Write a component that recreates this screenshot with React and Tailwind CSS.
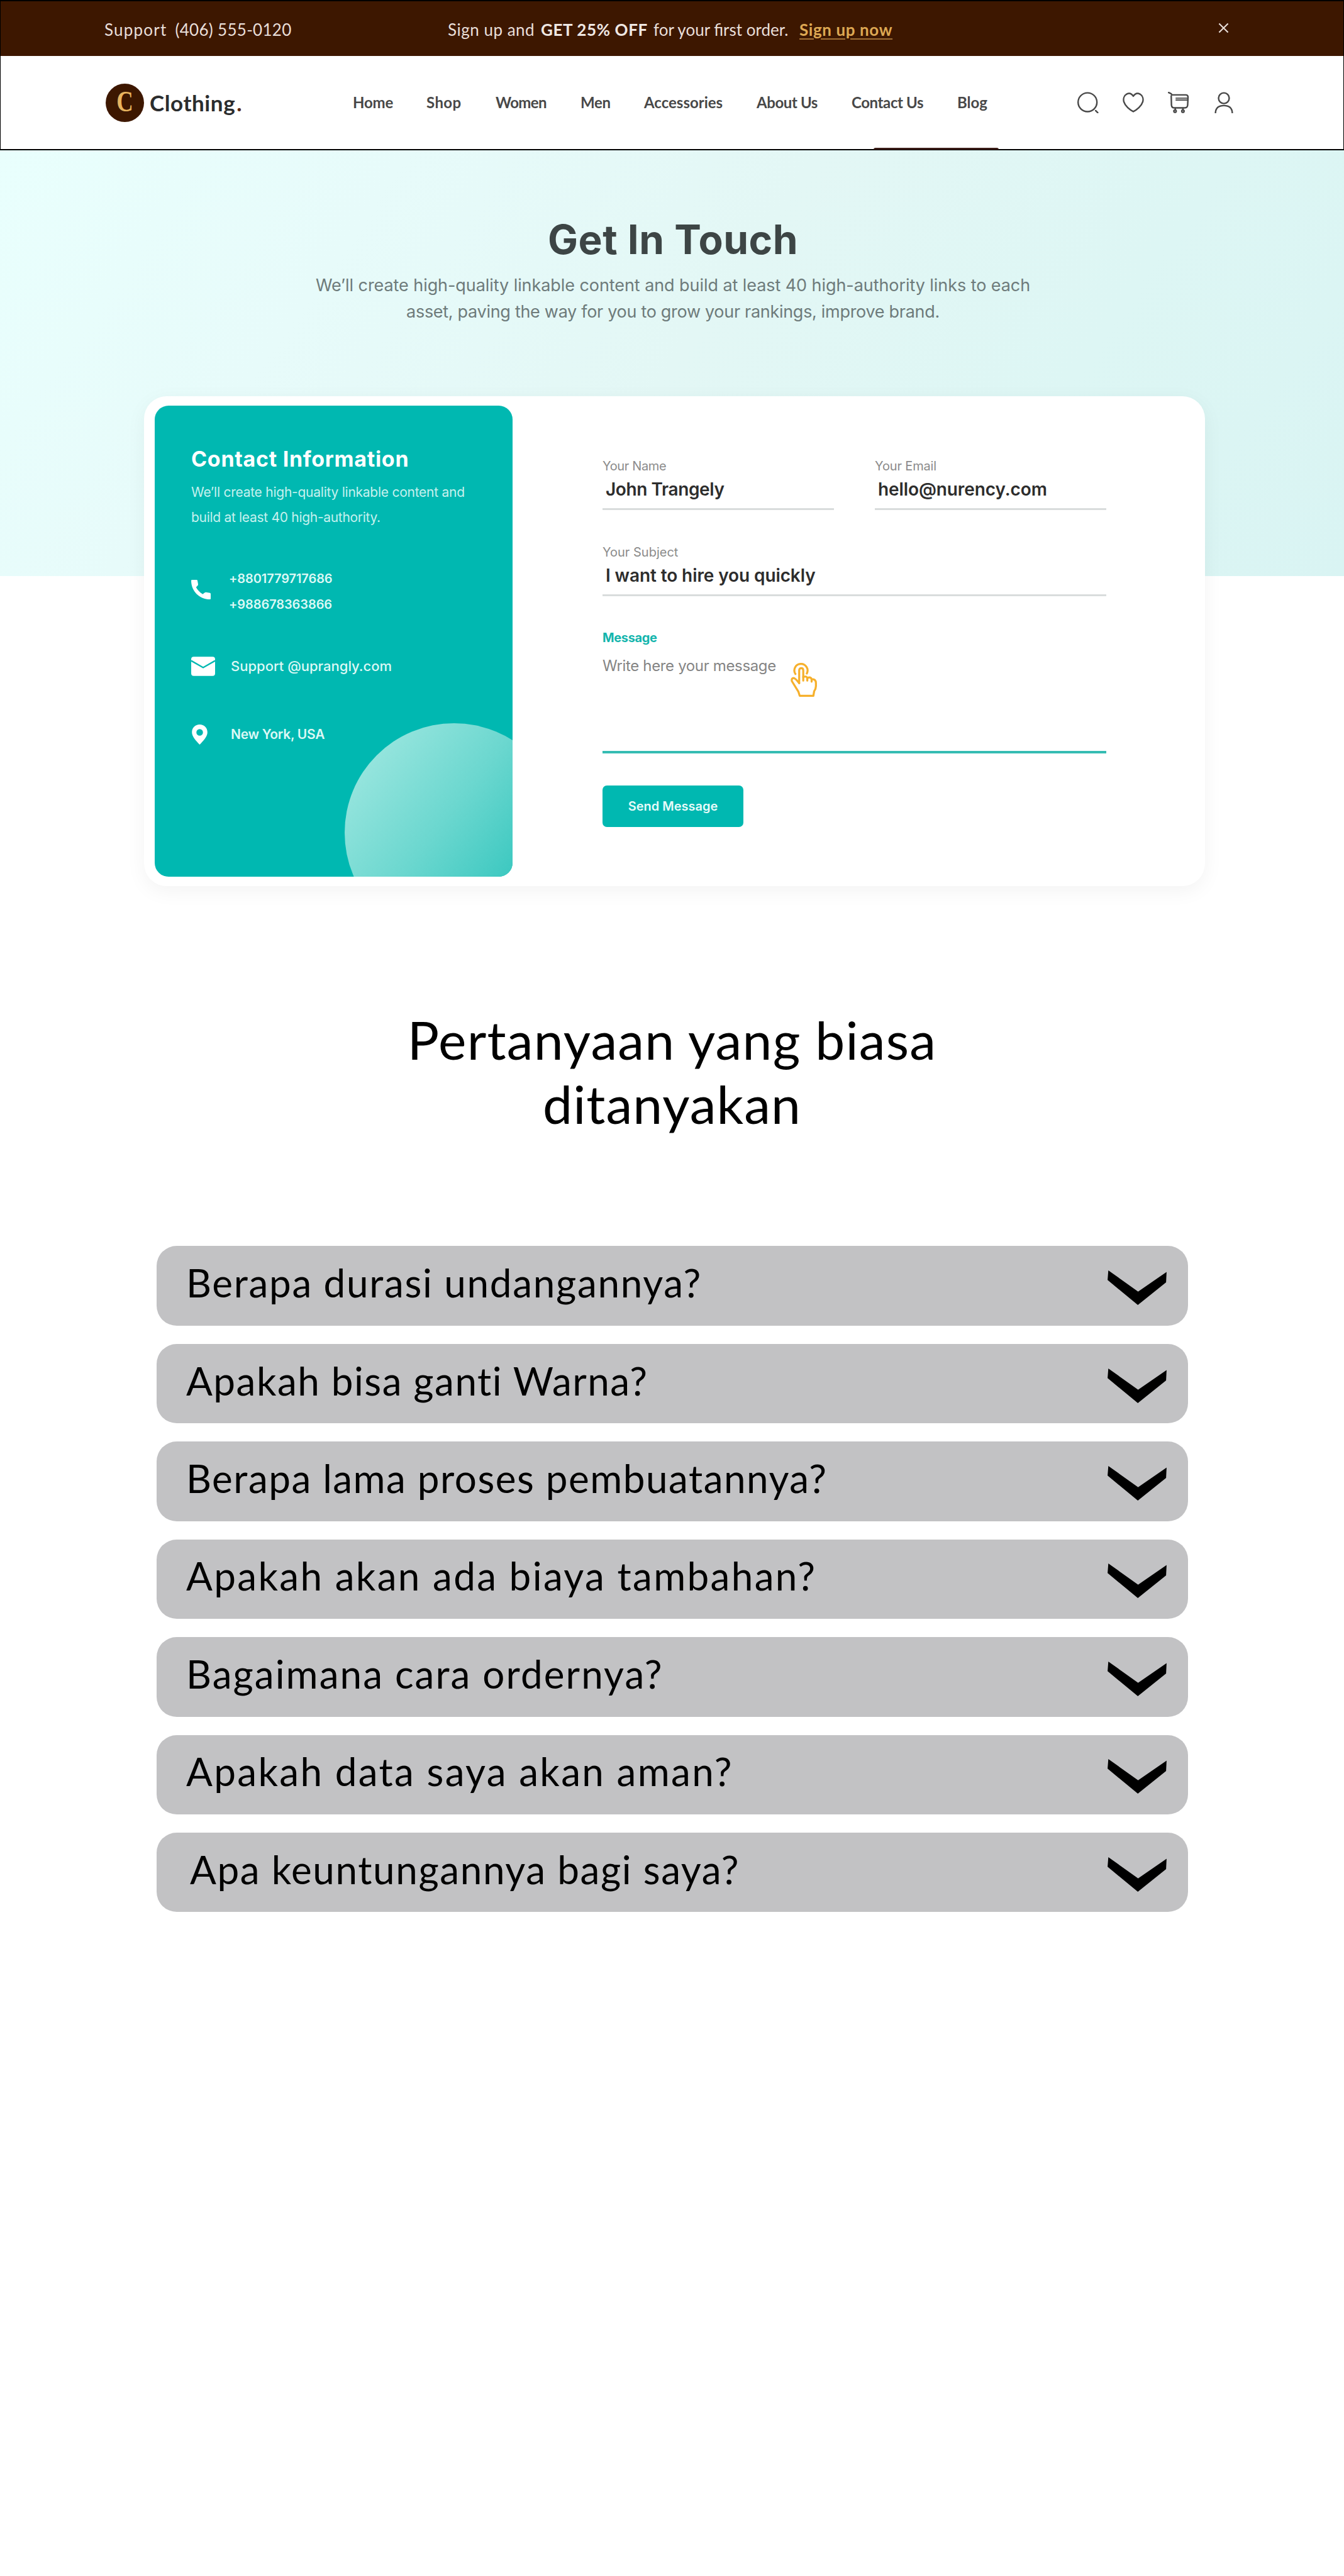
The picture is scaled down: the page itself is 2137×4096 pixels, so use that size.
const navItems = [
  { label: "Home", cls: "w-[62px] tracking-[-0.2px]" },
  { label: "Shop", cls: "w-[55px] tracking-[0.4px]" },
  { label: "Women", cls: "w-[80px] tracking-[-0.6px]" },
  { label: "Men", cls: "w-[46px] tracking-[-0.3px]" },
  { label: "Accessories", cls: "w-[124px]" },
  { label: "About Us", cls: "w-[96px] tracking-[-0.4px]" },
  { label: "Contact Us", cls: "w-[113px] tracking-[-0.4px]" },
  { label: "Blog", cls: "w-[48px]" },
];

const faqs = [
  { q: "Berapa durasi undangannya?", cls: "tracking-[1.7px]" },
  { q: "Apakah bisa ganti Warna?", cls: "tracking-[1.5px]" },
  { q: "Berapa lama proses pembuatannya?", cls: "tracking-[1.5px]" },
  { q: "Apakah akan ada biaya tambahan?", cls: "tracking-[2.35px]" },
  { q: "Bagaimana cara ordernya?", cls: "tracking-[2.05px]" },
  { q: "Apakah data saya akan aman?", cls: "tracking-[2.35px]" },
  { q: "Apa keuntungannya bagi saya?", cls: "ml-[6px] tracking-[1.6px]" },
];

function SearchIcon() {
  return (
    <svg viewBox="0 0 42 42" className="size-[34px]" fill="none" stroke="#484848" strokeWidth="3" strokeLinecap="round">
      <circle cx="20" cy="20.5" r="18.5" />
      <path d="M36 37 40 41" />
    </svg>
  );
}

function HeartIcon() {
  return (
    <svg viewBox="0 0 42 42" className="size-[34px]" fill="none" stroke="#484848" strokeWidth="3" strokeLinejoin="round">
      <path d="M21 8.5C17.5 3.5 12.5 2 8 4.5 2.5 7.5 .8 14 2.6 20 5 28 14 35.5 21 38.8 28 35.5 37 28 39.4 20 41.2 14 39.5 7.500 34 4.500 29.500 2 24.500 3.500 21 8.500Z" />
    </svg>
  );
}

function CartIcon() {
  return (
    <svg viewBox="0 0 42 42" className="size-[34px]" fill="none" stroke="#484848" strokeWidth="3" strokeLinecap="round" strokeLinejoin="round">
      <path d="M1.500 1.500 6 3.500 8 6H35Q39.500 6 39.500 10.500L38.800 26Q38.500 31.500 33 31.500H13Q7.500 31.500 7 26L6.500 8" />
      <path d="M16 12.500H38M16 16H38" strokeWidth="2.400" />
      <path d="M14.500 32V35M29.500 32V35" />
      <circle cx="14" cy="38" r="2.300" />
      <circle cx="29.500" cy="38" r="2.300" />
    </svg>
  );
}

function UserIcon() {
  return (
    <svg viewBox="0 0 42 42" className="size-[34px]" fill="none" stroke="#484848" strokeWidth="3" strokeLinecap="round">
      <circle cx="21" cy="12.500" r="10.500" />
      <path d="M4.500 41C5 32 11 27 21 27S37 32 37.500 41" />
    </svg>
  );
}

function PhoneIcon() {
  return (
    <svg viewBox="0 0 38 38" className="h-[31px] w-[31px]" fill="#fff">
      <path d="M1.500 0H10.500Q12 0 12.300 1.500L13.500 8.500Q13.700 10 12.700 11L9.500 14.500C12.500 20 16.500 24.500 22.500 28L26.500 24.800Q27.500 24 29 24.300L36.500 25.500Q38 26 38 27.500V36.500Q38 38 36.500 38C16 38 0 22 0 1.500Q0 0 1.500 0Z" />
    </svg>
  );
}

function MailIcon() {
  return (
    <svg viewBox="0 0 47 38" className="h-[31px] w-[38px]">
      <rect width="47" height="38" rx="5" fill="#fff" />
      <path d="M0 8 23.500 21.500 47 8" fill="none" stroke="#00b8b1" strokeWidth="2.800" />
    </svg>
  );
}

function PinIcon() {
  return (
    <svg viewBox="0 0 30 39" className="ml-[1px] h-[32px] w-[25px]">
      <path fillRule="evenodd" fill="#fff" d="M15 0C6.500 0 0 6.500 0 14.800 0 24 8 31 15 39 22 31 30 24 30 14.800 30 6.500 23.500 0 15 0ZM15 8.800A6.400 6.400 0 1 1 15 21.600 6.400 6.400 0 1 1 15 8.800Z" />
    </svg>
  );
}

function TapIcon() {
  return (
    <svg viewBox="0 0 52 67" className="h-[54px] w-[42px]" fill="none" stroke="#f6b02c" strokeWidth="4" strokeLinecap="round" strokeLinejoin="round">
      <path d="M9.500 22A13 13 0 1 1 32 21" />
      <path d="M17 40V15Q17 10.500 21 10.500T25 15V35" />
      <path d="M25 28Q32.500 25 33 31V35M33 30Q40.500 26.500 41.500 33V37M41.500 32Q50 31.500 50 40V46Q50 51 46.500 56L45 65H18L15.500 57 2.500 36Q1.500 30 6 30 9 30 17 40" />
    </svg>
  );
}

function Chevron() {
  return (
    <svg viewBox="0 0 116 68" className="mt-[6px] h-[55px] w-[94px] shrink-0" fill="#000">
      <path d="M1.500 0 60 41.700 116 3 115 23.500 59.500 68 0 19Z" />
    </svg>
  );
}

function Field({ label, value, labelCls = "", valueCls = "" }) {
  return (
    <div className="h-[84px] border-b-[3px] border-[#d9dcdc]">
      <div className={"h-[28px] text-[20px] leading-[28px] text-[#8b8b8b] " + labelCls}>{label}</div>
      <div className={"mt-[3px] h-[40px] pl-[5px] text-[28px] leading-[40px] font-semibold text-[#2d2d2d] " + valueCls}>{value}</div>
    </div>
  );
}

function Header() {
  return (
    <header className="h-[239px] border-x border-t-2 border-b-2 border-black bg-white font-['Lato',sans-serif]">
      <div className="flex h-[87px] items-center bg-[#3d1700] pt-[2px] pl-[165px] text-[26px] leading-none text-[#e9dfd9]">
        <div className="flex w-[546px] gap-[13px] whitespace-nowrap">
          <span className="tracking-[1.2px]">Support</span>
          <span className="tracking-[0.3px]">(406) 555-0120</span>
        </div>
        <div className="flex w-[1225px] whitespace-nowrap">
          <span className="w-[148px] tracking-[0.5px]">Sign up and</span>
          <span className="w-[179px] font-bold tracking-[0.6px] text-[#f0e8e3]">GET 25% OFF</span>
          <span className="w-[232px]">for your first order.</span>
          <span className="font-bold tracking-[0.6px] text-[#dda853] underline decoration-[#a06f35] decoration-2 underline-offset-[4px]">Sign up now</span>
        </div>
        <svg viewBox="0 0 18 18" className="-mt-[4px] size-[17px]" stroke="#e9dfd9" strokeWidth="2.200">
          <path d="M1.500 1.500 16.500 16.500M16.500 1.500 1.500 16.500" />
        </svg>
      </div>
      <div className="flex h-[148px] items-center pl-[167px]">
        <div className="flex w-[393px] items-center">
          <div className="flex size-[61px] items-center justify-center rounded-full bg-[#3d1700] font-['Liberation_Serif',serif] text-[46px] leading-none font-bold text-[#e8b45f]">
            <span className="-mt-[2px] scale-x-[0.8]">C</span>
          </div>
          <div className="ml-[9px] text-[35px] leading-none font-bold tracking-[0.6px] text-[#2b2d2e]">
            Clothing<span className="ml-[2px] text-[#5a2a14]">.</span>
          </div>
        </div>
        <nav className="flex w-[1152px] gap-[55px] text-[24px] leading-none font-bold text-[#484848]">
          {navItems.map((n) => (
            <a key={n.label} className={"whitespace-nowrap " + n.cls}>{n.label}</a>
          ))}
        </nav>
        <div className="flex gap-[38px]">
          <SearchIcon />
          <HeartIcon />
          <CartIcon />
          <UserIcon />
        </div>
      </div>
      <div className="-mt-[2px] ml-[1388px] h-[3px] w-[199px] rounded-t-[3px] bg-[#3a1c17]" />
    </header>
  );
}

function ContactPanel() {
  return (
    <div className="relative h-[749px] w-[569px] overflow-hidden rounded-[22px] bg-[#00b8b1] pt-[65px] pl-[58px] text-white">
      <div className="absolute top-[505px] left-[302px] size-[348px] rounded-full bg-[linear-gradient(128deg,#9de7e0_8%,#6bd7cf_45%,#35c6be_78%)]" />
      <h2 className="h-[40px] text-[34px] leading-[40px] font-bold tracking-[0.7px]">Contact Information</h2>
      <p className="mt-[13px] text-[21px] leading-[39.4px] whitespace-nowrap text-[#c6f1ee]">
        <span className="block tracking-[-0.25px]">We’ll create high-quality linkable content and</span>
        <span className="block tracking-[-0.3px]">build at least 40 high-authority.</span>
      </p>
      <div className="mt-[58px] flex h-[81px] items-center">
        <div className="-mt-[7px] w-[60px]"><PhoneIcon /></div>
        <div className="text-[20px] leading-[40.6px] font-semibold tracking-[-0.1px] text-[#dcf8f5]">
          <div>+8801779717686</div>
          <div>+988678363866</div>
        </div>
      </div>
      <div className="mt-[58px] flex h-[40px] items-center">
        <div className="w-[63px]"><MailIcon /></div>
        <div className="text-[22px] font-medium text-[#dcf8f5]">Support @uprangly.com</div>
      </div>
      <div className="mt-[69px] flex h-[40px] items-center">
        <div className="w-[63px]"><PinIcon /></div>
        <div className="text-[21px] font-semibold tracking-[-0.3px] text-[#dcf8f5]">New York, USA</div>
      </div>
    </div>
  );
}

function ContactForm() {
  return (
    <form className="ml-[143px] w-[801px] pt-[82px]">
      <div className="grid grid-cols-2 gap-x-[65px]">
        <Field label="Your Name" value="John Trangely" labelCls="tracking-[-0.35px]" valueCls="tracking-[-0.4px]" />
        <Field label="Your Email" value="hello@nurency.com" labelCls="tracking-[-0.15px]" valueCls="tracking-[-0.1px]" />
      </div>
      <div className="mt-[53px]">
        <Field label="Your Subject" value="I want to hire you quickly" valueCls="tracking-[-0.1px]" />
      </div>
      <div className="mt-[52px] h-[198px] border-b-[4px] border-[#35bcb3]">
        <div className="h-[28px] text-[20px] leading-[28px] font-bold tracking-[-0.35px] text-[#14b5ad]">Message</div>
        <div className="mt-[11px] flex h-[40px] text-[24px] leading-[40px] text-[#858585]">
          <span className="w-[299px] tracking-[-0.35px]">Write here your message</span>
          <div className="mt-[15px] h-[54px]"><TapIcon /></div>
        </div>
      </div>
      <button type="button" className="mt-[51px] h-[66px] w-[224px] rounded-[7px] bg-[#00b8b1] text-[20px] font-semibold text-[#e6fbf9]">Send Message</button>
    </form>
  );
}

export default function App() {
  return (
    <div className="h-[4096px] w-[2137px] overflow-hidden bg-white font-['Inter',sans-serif]">
      <Header />
      <main className="bg-[linear-gradient(125deg,#e9fffd_0%,#e7fbfa_25%,#e3f7f5_50%,#ddf6f4_75%,#d9f4f3_100%)] bg-[length:100%_677px] bg-no-repeat pt-[102px]">
        <div className="pl-[3px] text-center">
          <h1 className="h-[80px] text-[64px] leading-[80px] font-bold tracking-[0.5px] text-[#3d4545]">Get In Touch</h1>
          <p className="mt-[12px] text-[27px] leading-[42.2px] text-[#6e7b7b]">
            <span className="block tracking-[-0.07px]">We’ll create high-quality linkable content and build at least 40 high-authority links to each</span>
            <span className="block tracking-[-0.3px]">asset, paving the way for you to grow your rankings, improve brand.</span>
          </p>
        </div>
        <section className="mt-[113px] ml-[229px] flex h-[779px] w-[1687px] rounded-[36px] bg-white pt-[15px] pl-[17px] shadow-[0_8px_32px_rgba(0,0,0,0.05)]">
          <ContactPanel />
          <ContactForm />
        </section>
        <section className="font-['Lato',sans-serif] text-black">
          <h2 className="mt-[193px] text-center text-[84px] leading-[102px]">
            <span className="block tracking-[1.2px]">Pertanyaan yang biasa</span>
            <span className="block tracking-[1.05px]">ditanyakan</span>
          </h2>
          <ul className="mt-[175px] ml-[249px] flex w-[1640px] flex-col gap-[29px]">
            {faqs.map((f) => (
              <li key={f.q} className="flex h-[126.45px] items-center justify-between rounded-[32px] bg-[#c2c2c4] pr-[34px] pl-[47px]">
                <span className={"pb-[11px] text-[62px] leading-none whitespace-nowrap " + f.cls}>{f.q}</span>
                <Chevron />
              </li>
            ))}
          </ul>
        </section>
      </main>
    </div>
  );
}
